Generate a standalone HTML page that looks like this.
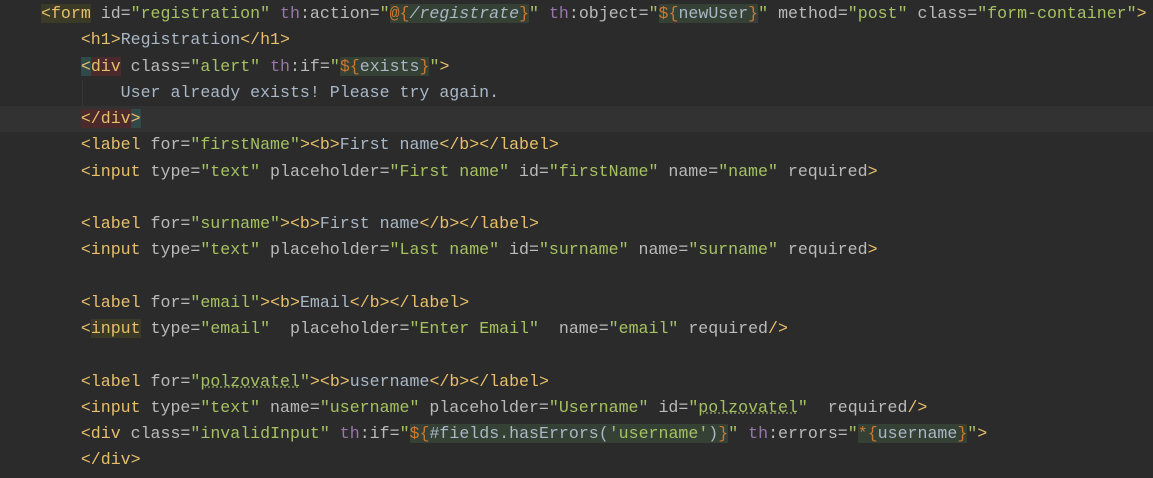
<!DOCTYPE html>
<html><head><meta charset="utf-8"><style>
html,body{margin:0;padding:0;background:#2b2b2b;width:1153px;height:478px;overflow:hidden}
.c{position:absolute;left:41px;top:1px;font-family:"Liberation Mono",monospace;font-size:16.6px;line-height:26.25px;color:#a9b7c6}
.l{height:26.25px;white-space:pre}
.cur{position:absolute;left:0;width:1153px;top:106px;height:26px;background:#323232}
.t{color:#e8bf6a}.a{color:#bababa}.v{color:#a5c261}.p{color:#9876aa}.o{color:#cc7832}
.e{background:#344134}
.hf{background:#3b3a26}.hr{background:#4a2a2a}.hg{background:#2f4a48}
.u{text-decoration:underline dotted #7a8a5a}
.g{position:absolute;width:1px;background:#373737}
</style></head><body>
<div class="cur"></div>
<div class="g" style="left:82px;top:80px;height:26px"></div>
<div class="c"><div class="l"><span class="t hf">&lt;form</span><span class="a"> id=</span><span class="v">"registration"</span> <span class="p">th</span><span class="a">:action=</span><span class="v">"</span><span class="e"><span class="o">@{</span><i>/registrate</i><span class="o">}</span></span><span class="v">"</span> <span class="p">th</span><span class="a">:object=</span><span class="v">"</span><span class="e"><span class="o">${</span>newUser<span class="o">}</span></span><span class="v">"</span><span class="a"> method=</span><span class="v">"post"</span><span class="a"> class=</span><span class="v">"form-container"</span><span class="t">&gt;</span></div><div class="l">    <span class="t">&lt;h1&gt;</span>Registration<span class="t">&lt;/h1&gt;</span></div><div class="l">    <span class="t"><span class="hg">&lt;</span><span class="hr">div</span></span><span class="a"> class=</span><span class="v">"alert"</span> <span class="p">th</span><span class="a">:if=</span><span class="v">"</span><span class="e"><span class="o">${</span>exists<span class="o">}</span></span><span class="v">"</span><span class="t">&gt;</span></div><div class="l">        User already exists! Please try again.</div><div class="l">    <span class="t"><span class="hr">&lt;/div</span><span class="hg">&gt;</span></span></div><div class="l">    <span class="t">&lt;label</span><span class="a"> for=</span><span class="v">"firstName"</span><span class="t">&gt;&lt;b&gt;</span>First name<span class="t">&lt;/b&gt;&lt;/label&gt;</span></div><div class="l">    <span class="t">&lt;input</span><span class="a"> type=</span><span class="v">"text"</span><span class="a"> placeholder=</span><span class="v">"First name"</span><span class="a"> id=</span><span class="v">"firstName"</span><span class="a"> name=</span><span class="v">"name"</span><span class="a"> required</span><span class="t">&gt;</span></div><div class="l"> </div><div class="l">    <span class="t">&lt;label</span><span class="a"> for=</span><span class="v">"surname"</span><span class="t">&gt;&lt;b&gt;</span>First name<span class="t">&lt;/b&gt;&lt;/label&gt;</span></div><div class="l">    <span class="t">&lt;input</span><span class="a"> type=</span><span class="v">"text"</span><span class="a"> placeholder=</span><span class="v">"Last name"</span><span class="a"> id=</span><span class="v">"surname"</span><span class="a"> name=</span><span class="v">"surname"</span><span class="a"> required</span><span class="t">&gt;</span></div><div class="l"> </div><div class="l">    <span class="t">&lt;label</span><span class="a"> for=</span><span class="v">"email"</span><span class="t">&gt;&lt;b&gt;</span>Email<span class="t">&lt;/b&gt;&lt;/label&gt;</span></div><div class="l">    <span class="t">&lt;<span class="hf">input</span></span><span class="a"> type=</span><span class="v">"email"</span><span class="a">  placeholder=</span><span class="v">"Enter Email"</span><span class="a">  name=</span><span class="v">"email"</span><span class="a"> required</span><span class="t">/&gt;</span></div><div class="l"> </div><div class="l">    <span class="t">&lt;label</span><span class="a"> for=</span><span class="v">"<span class="u">polzovatel</span>"</span><span class="t">&gt;&lt;b&gt;</span>username<span class="t">&lt;/b&gt;&lt;/label&gt;</span></div><div class="l">    <span class="t">&lt;input</span><span class="a"> type=</span><span class="v">"text"</span><span class="a"> name=</span><span class="v">"username"</span><span class="a"> placeholder=</span><span class="v">"Username"</span><span class="a"> id=</span><span class="v">"<span class="u">polzovatel</span>"</span><span class="a">  required</span><span class="t">/&gt;</span></div><div class="l">    <span class="t">&lt;div</span><span class="a"> class=</span><span class="v">"invalidInput"</span> <span class="p">th</span><span class="a">:if=</span><span class="v">"</span><span class="e"><span class="o">${</span>#fields.hasErrors(<span class="v">'username'</span>)<span class="o">}</span></span><span class="v">"</span> <span class="p">th</span><span class="a">:errors=</span><span class="v">"</span><span class="e"><span class="o">*{</span>username<span class="o">}</span></span><span class="v">"</span><span class="t">&gt;</span></div><div class="l">    <span class="t">&lt;/div&gt;</span></div></div>
</body></html>
